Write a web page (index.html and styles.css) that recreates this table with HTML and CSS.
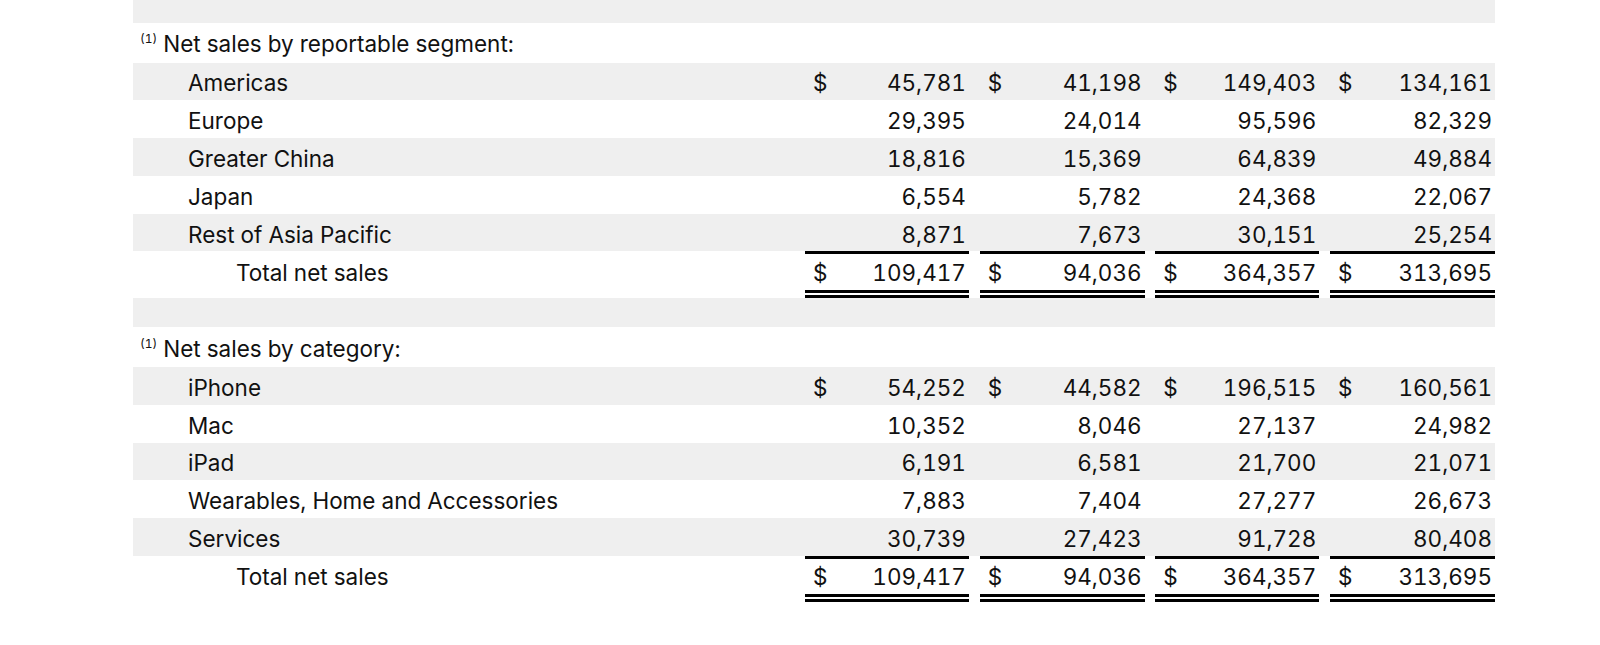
FILE: index.html
```html
<!DOCTYPE html>
<html lang="en">
<head>
<meta charset="utf-8">
<title>Net sales</title>
<link rel="stylesheet" href="styles.css">
</head>
<body>
<div class="sheet">
  <div class="row band top"></div>

  <div class="row head"><div class="lab"><sup class="fn">(1)</sup> Net sales by reportable segment:</div></div>
  <div class="row band"><div class="lab item">Americas</div>
    <div class="amt"><span class="cur">$</span><span class="num">45,781</span></div>
    <div class="amt"><span class="cur">$</span><span class="num">41,198</span></div>
    <div class="amt"><span class="cur">$</span><span class="num">149,403</span></div>
    <div class="amt"><span class="cur">$</span><span class="num">134,161</span></div>
  </div>
  <div class="row"><div class="lab item">Europe</div>
    <div class="amt"><span class="num">29,395</span></div>
    <div class="amt"><span class="num">24,014</span></div>
    <div class="amt"><span class="num">95,596</span></div>
    <div class="amt"><span class="num">82,329</span></div>
  </div>
  <div class="row band"><div class="lab item">Greater China</div>
    <div class="amt"><span class="num">18,816</span></div>
    <div class="amt"><span class="num">15,369</span></div>
    <div class="amt"><span class="num">64,839</span></div>
    <div class="amt"><span class="num">49,884</span></div>
  </div>
  <div class="row"><div class="lab item">Japan</div>
    <div class="amt"><span class="num">6,554</span></div>
    <div class="amt"><span class="num">5,782</span></div>
    <div class="amt"><span class="num">24,368</span></div>
    <div class="amt"><span class="num">22,067</span></div>
  </div>
  <div class="row band"><div class="lab item">Rest of Asia Pacific</div>
    <div class="amt"><span class="num">8,871</span></div>
    <div class="amt"><span class="num">7,673</span></div>
    <div class="amt"><span class="num">30,151</span></div>
    <div class="amt"><span class="num">25,254</span></div>
  </div>
  <div class="row total"><div class="lab sum">Total net sales</div>
    <div class="amt"><span class="cur">$</span><span class="num">109,417</span></div>
    <div class="amt"><span class="cur">$</span><span class="num">94,036</span></div>
    <div class="amt"><span class="cur">$</span><span class="num">364,357</span></div>
    <div class="amt"><span class="cur">$</span><span class="num">313,695</span></div>
  </div>
  <div class="row band spacer"></div>

  <div class="row head"><div class="lab"><sup class="fn">(1)</sup> Net sales by category:</div></div>
  <div class="row band"><div class="lab item">iPhone</div>
    <div class="amt"><span class="cur">$</span><span class="num">54,252</span></div>
    <div class="amt"><span class="cur">$</span><span class="num">44,582</span></div>
    <div class="amt"><span class="cur">$</span><span class="num">196,515</span></div>
    <div class="amt"><span class="cur">$</span><span class="num">160,561</span></div>
  </div>
  <div class="row"><div class="lab item">Mac</div>
    <div class="amt"><span class="num">10,352</span></div>
    <div class="amt"><span class="num">8,046</span></div>
    <div class="amt"><span class="num">27,137</span></div>
    <div class="amt"><span class="num">24,982</span></div>
  </div>
  <div class="row band"><div class="lab item">iPad</div>
    <div class="amt"><span class="num">6,191</span></div>
    <div class="amt"><span class="num">6,581</span></div>
    <div class="amt"><span class="num">21,700</span></div>
    <div class="amt"><span class="num">21,071</span></div>
  </div>
  <div class="row"><div class="lab item">Wearables, Home and Accessories</div>
    <div class="amt"><span class="num">7,883</span></div>
    <div class="amt"><span class="num">7,404</span></div>
    <div class="amt"><span class="num">27,277</span></div>
    <div class="amt"><span class="num">26,673</span></div>
  </div>
  <div class="row band"><div class="lab item">Services</div>
    <div class="amt"><span class="num">30,739</span></div>
    <div class="amt"><span class="num">27,423</span></div>
    <div class="amt"><span class="num">91,728</span></div>
    <div class="amt"><span class="num">80,408</span></div>
  </div>
  <div class="row total"><div class="lab sum">Total net sales</div>
    <div class="amt"><span class="cur">$</span><span class="num">109,417</span></div>
    <div class="amt"><span class="cur">$</span><span class="num">94,036</span></div>
    <div class="amt"><span class="cur">$</span><span class="num">364,357</span></div>
    <div class="amt"><span class="cur">$</span><span class="num">313,695</span></div>
  </div>
</div>
</body>
</html>
```

FILE: styles.css
```css
html, body {
  margin: 0;
  padding: 0;
  background: #ffffff;
}

body {
  font-family: "Inter", "Roboto", "Liberation Sans", sans-serif;
  font-size: 22.5px;
  color: #111111;
  font-variant-numeric: tabular-nums;
}

.sheet {
  width: 1362px;
  margin-left: 133px;
}

.row {
  display: grid;
  grid-template-columns: 1fr 164px 165px 164px 165px;
  column-gap: 10.7px;
  height: 37.8px;
  align-items: center;
  background: #ffffff;
}

.band {
  background: #efefef;
}

.row.top {
  height: 23px;
}

.row.head {
  height: 39.5px;
}

.lab {
  white-space: nowrap;
  padding-top: 3px;
}

.lab.item {
  padding-left: 55px;
}

.lab.sum {
  padding-left: 103px;
}

.head .lab {
  padding-left: 7px;
  padding-top: 2px;
}

.fn {
  font-size: 12px;
  vertical-align: 9px;
  line-height: 0;
}

.amt {
  display: flex;
  justify-content: space-between;
  align-items: center;
  height: 100%;
  box-sizing: border-box;
  padding: 3px 3px 0 8px;
}

.num {
  margin-left: auto;
}

.row.total {
  height: 46.5px;
  align-items: stretch;
}

.total .lab {
  display: flex;
  align-items: center;
  padding-top: 3px;
  padding-bottom: 8px;
}

.total .amt {
  border-top: 3px solid #000000;
  border-bottom: 8px double #000000;
  padding-top: 0;
}

.row.spacer {
  height: 29.5px;
}
```
